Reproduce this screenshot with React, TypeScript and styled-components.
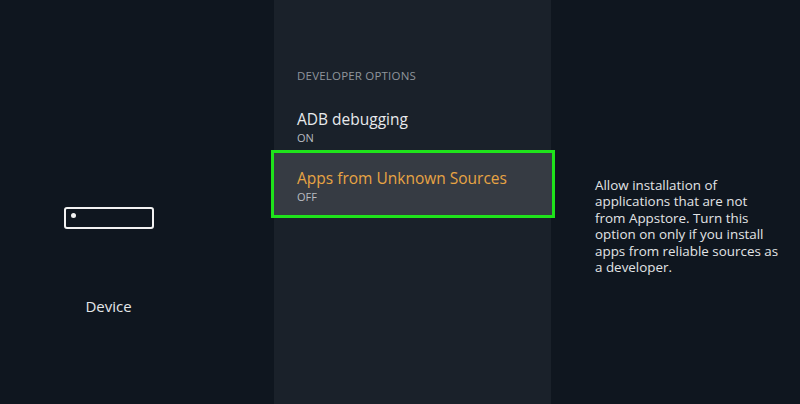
import styled, { createGlobalStyle } from 'styled-components';

const Global = createGlobalStyle`
  html, body { margin: 0; padding: 0; background: #0f161f; }
  body { font-family: "Open Sans", "Noto Sans", sans-serif; }
`;

const Screen = styled.div`
  width: 800px;
  height: 404px;
  display: grid;
  grid-template-columns: 274px 277px 1fr;
  background: #0f161f;
  overflow: hidden;
`;

const SideColumn = styled.div`
  display: flex;
  flex-direction: column;
  align-items: center;
  padding-top: 207px;
  box-sizing: border-box;
  width: 217px;
`;

const DeviceIcon = styled.div`
  width: 86px;
  height: 18px;
  border: 2px solid #f2f2f2;
  border-radius: 3px;
  position: relative;
  &::before {
    content: '';
    position: absolute;
    left: 5px;
    top: 4px;
    width: 5px;
    height: 5px;
    border-radius: 50%;
    background: #f2f2f2;
  }
`;

const SideLabel = styled.div`
  margin-top: 67px;
  color: #e4e6e8;
  font-size: 15px;
`;

const MenuColumn = styled.div`
  background: #1a212a;
  padding-top: 68px;
  display: flex;
  flex-direction: column;
`;

const Heading = styled.div`
  color: #8f959c;
  font-size: 11.5px;
  letter-spacing: 0.2px;
  padding-left: 23px;
  margin-bottom: 26px;
`;

const Item = styled.div<{ $selected?: boolean }>`
  padding: ${p => (p.$selected ? '15px 0 11px 23px' : '0 0 0 23px')};
  margin: ${p => (p.$selected ? '5px -4px 0 -3px' : '0')};
  border: ${p => (p.$selected ? '3px solid #1fe31b' : 'none')};
  background: ${p => (p.$selected ? '#363b43' : 'transparent')};
`;

const ItemTitle = styled.div<{ $selected?: boolean }>`
  color: ${p => (p.$selected ? '#e8a443' : '#e8eaec')};
  font-size: 15.5px;
  line-height: 20px;
`;

const ItemValue = styled.div`
  color: #b8bcc1;
  font-size: 11px;
  line-height: 14px;
  margin-top: 2px;
`;

const InfoColumn = styled.div`
  padding: 177px 0 0 44px;
`;

const Info = styled.p`
  margin: 0;
  color: #e2e4e6;
  font-size: 13.4px;
  line-height: 16.4px;
  white-space: nowrap;
`;

const infoLines = [
  'Allow installation of',
  'applications that are not',
  'from Appstore. Turn this',
  'option on only if you install',
  'apps from reliable sources as',
  'a developer.',
];

export default function App() {
  return (
    <>
      <Global />
      <Screen>
        <SideColumn>
          <DeviceIcon />
          <SideLabel>Device</SideLabel>
        </SideColumn>
        <MenuColumn>
          <Heading>DEVELOPER OPTIONS</Heading>
          <Item>
            <ItemTitle>ADB debugging</ItemTitle>
            <ItemValue>ON</ItemValue>
          </Item>
          <Item $selected>
            <ItemTitle $selected>Apps from Unknown Sources</ItemTitle>
            <ItemValue>OFF</ItemValue>
          </Item>
        </MenuColumn>
        <InfoColumn>
          <Info>
            {infoLines.map((line, i) => (
              <span key={i}>
                {line}
                {i < infoLines.length - 1 && <br />}
              </span>
            ))}
          </Info>
        </InfoColumn>
      </Screen>
    </>
  );
}
